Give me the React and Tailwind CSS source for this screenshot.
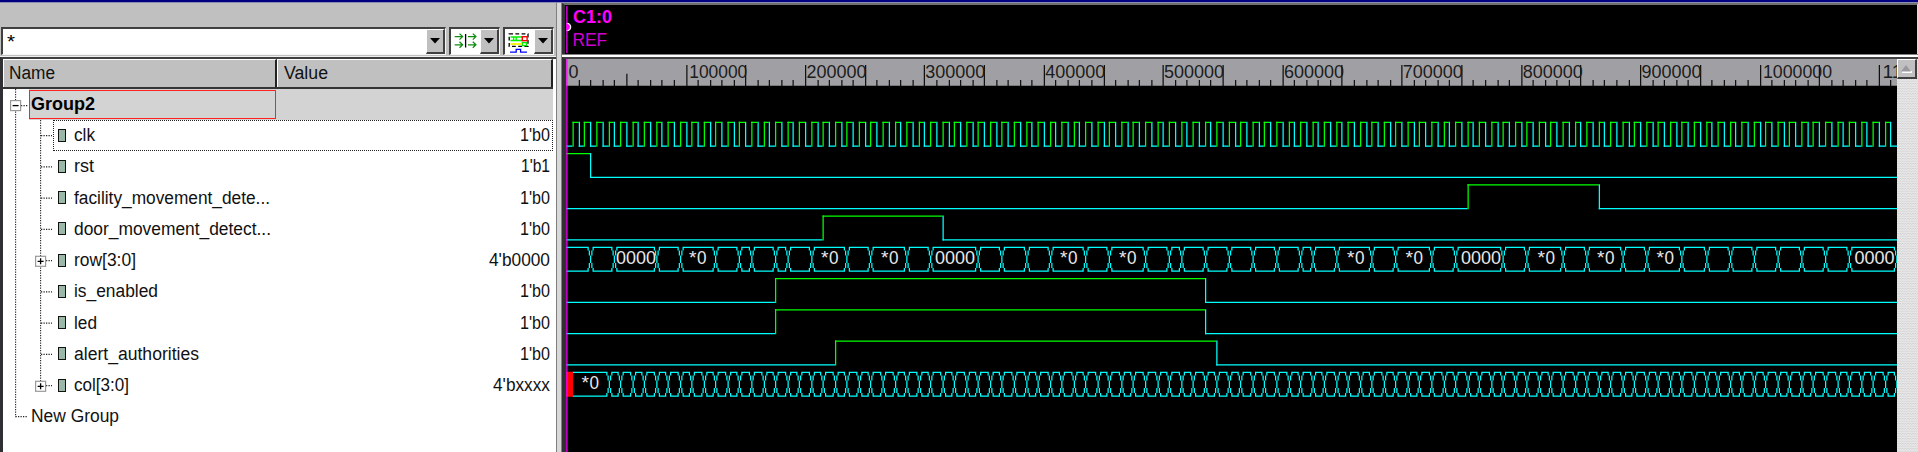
import React from "react";

const FONT = "'Liberation Sans', Arial, sans-serif";
const CYAN = "#00ffff";
const GREEN = "#00ff00";

// Waveform canvas uses device units; one unit is 1.25 CSS pixels.
const U = 1.25;
const ORIGIN = 453.6;
const STEP = 9.544;
const END = 1517.6;
const at = (t) => Math.floor(ORIGIN + STEP * t);

const signals = [
  { name: "clk", value: "1'b0", w: 21 },
  { name: "rst", value: "1'b1", w: 20 },
  { name: "facility_movement_dete...", value: "1'b0", w: 196 },
  { name: "door_movement_detect...", value: "1'b0", w: 197 },
  { name: "row[3:0]", value: "4'b0000", w: 62 },
  { name: "is_enabled", value: "1'b0", w: 84 },
  { name: "led", value: "1'b0", w: 23 },
  { name: "alert_authorities", value: "1'b0", w: 125 },
  { name: "col[3:0]", value: "4'bxxxx", w: 55 },
];
const valueWidth = { "1'b0": 30, "1'b1": 29, "4'b0000": 61, "4'bxxxx": 57 };

function Label({ x = 0, y = 17, w, size = 18, bold, fill = "#000", children }) {
  return (
    <text
      x={x}
      y={y}
      fontSize={size}
      fontFamily={FONT}
      fontWeight={bold ? 700 : 400}
      fill={fill}
      textLength={w}
      lengthAdjust="spacingAndGlyphs"
    >
      {children}
    </text>
  );
}

function Text({ w, bold, children }) {
  return (
    <svg width={w + 2} height="24" className="block shrink-0 overflow-visible">
      <Label w={w} bold={bold} fill={bold ? "#000" : "#111"}>
        {children}
      </Label>
    </svg>
  );
}

function Bit({ row, edges, start = 0 }) {
  const hi = 97 + row * 25;
  const lo = hi + 19;
  const out = [];
  let level = start;
  let x = 453;
  edges.forEach((t, i) => {
    const n = at(t);
    out.push(
      <rect key={`h${i}`} x={x} y={level ? hi : lo} width={n - x} height="1" fill={level ? GREEN : CYAN} />,
      <rect key={`v${i}`} x={n} y={hi} width="1" height="20" fill={level ? CYAN : GREEN} />
    );
    level = 1 - level;
    x = n;
  });
  out.push(<rect key="end" x={x} y={level ? hi : lo} width={END - x} height="1" fill={level ? GREEN : CYAN} />);
  return <g>{out}</g>;
}

function Bus({ row, cuts, from }) {
  const y = 97 + row * 25;
  const xs = cuts.map(at);
  let prev = from;
  let d = "";
  xs.forEach((n) => {
    d += `M${prev} ${y}H${n - 1}v1H${prev}zM${prev} ${y + 19}H${n - 1}v1H${prev}z`;
    [-1, 1].forEach((s) => {
      d += `M${n + 2 * s} ${y + 1}h1v2h-1zM${n + s} ${y + 3}h1v4h-1z`;
      d += `M${n + s} ${y + 13}h1v4h-1zM${n + 2 * s} ${y + 17}h1v2h-1z`;
    });
    d += `M${n} ${y + 7}h1v6h-1z`;
    prev = n + 2;
  });
  if (prev < END) d += `M${prev} ${y}H${END}v1H${prev}zM${prev} ${y + 19}H${END}v1H${prev}z`;
  return <path d={d} fill={CYAN} />;
}

const clkEdges = Array.from({ length: 222 }, (_, i) => (i + 1) * 0.5);
const rowCuts = [
  2, 4, 7.5, 9.5, 12.5, 14.5, 15.5, 17.5, 18.5, 20.5, 23.5, 25.5, 28.5, 30.5, 34.5, 36.5, 38.5, 40.5, 43.5,
  45.5, 48.5, 50.5, 51.5, 53.5, 55.5, 57.5, 59.5, 61.5, 62.5, 64.5, 67.5, 69.5, 72.5, 74.5, 78.5, 80.5, 83.5,
  85.5, 88.5, 90.5, 93.5, 95.5, 97.5, 99.5, 101.5, 103.5, 105.5, 107.5, 111.5,
];
const colCuts = Array.from({ length: 109 }, (_, i) => i + 3.5);
const starLabels = [689, 821, 881, 1060, 1119, 1347, 1405.5, 1537.5, 1597, 1656.5];
const zeroLabels = [616.5, 935.5, 1461.5, 1855];

function Star({ x, y }) {
  return (
    <g>
      <Label x={x + 0.5} y={y} w={7.5} fill="#e8e8e8">*</Label>
      <Label x={x + 8.5} y={y} w={9.5} fill="#e8e8e8">0</Label>
    </g>
  );
}

function Waves() {
  return (
    <svg width="1331" height="365.5" viewBox="566 86.5 1331 365.5" className="block shrink-0 bg-black">
      <g transform={`scale(${U})`}>
        <Bit row={0} edges={clkEdges} />
        <Bit row={1} edges={[2]} start={1} />
        <Bit row={2} edges={[75.5, 86.5]} />
        <Bit row={3} edges={[21.5, 31.5]} />
        <Bus row={4} cuts={rowCuts} from={453} />
        <Bit row={5} edges={[17.5, 53.5]} />
        <Bit row={6} edges={[17.5, 53.5]} />
        <Bit row={7} edges={[22.5, 54.5]} />
        <Bus row={8} cuts={colCuts} from={458} />
        <rect x="453" y="297" width="5.4" height="20" fill="#ff0000" />
        <rect x="453" y="68" width="1" height="300" fill="#ff00ff" />
      </g>
      {starLabels.map((x) => (
        <Star key={x} x={x - 0.5} y={263.5} />
      ))}
      {zeroLabels.map((x) => (
        <Label key={x} x={x - 0.5} y={263.5} w={40} fill="#e8e8e8">0000</Label>
      ))}
      <Star x={581} y={388.5} />
    </svg>
  );
}

function Ruler() {
  const ticks = [];
  for (let k = 1; k <= 111; k++) {
    const top = k % 10 === 0 ? 52 : k % 5 === 0 ? (k === 5 ? 59 : 52) : 64;
    ticks.push(<rect key={k} x={at(k)} y={top} width="1" height={69 - top} fill="#111" />);
  }
  return (
    <svg width="1331" height="27.5" viewBox="566 59 1331 27.5" className="block shrink-0 bg-[#a0a0a4]">
      <g transform={`scale(${U})`}>
        {ticks}
        <rect x="453" y="68.6" width="1070" height="1" fill="#000" />
        <rect x="453" y="45" width="1" height="26" fill="#ff00ff" />
      </g>
      <Label x={568.5} y={77.5} w={10} fill="#1c1c1c">0</Label>
      {[1, 2, 3, 4, 5, 6, 7, 8, 9].map((n) => (
        <Label key={n} x={at(n * 10) * U + (n === 1 ? 3 : 1.5)} y={77.5} w={n === 1 ? 58 : 60} fill="#1c1c1c">
          {`${n}00000`}
        </Label>
      ))}
      <Label x={1763} y={77.5} w={69} fill="#1c1c1c">1000000</Label>
      <Label x={1882.5} y={77.5} w={20} fill="#1c1c1c">11</Label>
    </svg>
  );
}

function DropButton() {
  return (
    <div className="flex h-full w-[19.5px] items-center justify-center border-t-[1.25px] border-r-2 border-b-2 border-l-[1.25px] border-t-white border-l-white border-r-[#404040] border-b-[#404040] bg-[#c0c0c0]">
      <svg width="10" height="6" viewBox="0 0 10 6">
        <path d="M0 0H10L5 5.5Z" fill="#000" />
      </svg>
    </div>
  );
}

function Combo({ className, children }) {
  return (
    <div
      className={`flex h-[28px] items-stretch justify-between border-t-2 border-l-2 border-r border-b border-t-[#404040] border-l-[#404040] border-r-[#f4f4f4] border-b-[#f4f4f4] bg-white ${className}`}
    >
      {children}
      <DropButton />
    </div>
  );
}

function AlignIcon() {
  return (
    <svg width="24" height="24" viewBox="0 0 24 24" className="ml-[2px] mt-px overflow-visible" fill="none">
      <path
        d="M1.7 6.6H9.7M6.5 3.6L9.6 6.6L6.5 9.6M1.7 14.8H9.7M6.5 11.8L9.6 14.8L6.5 17.8M15 6.6H23M19.8 3.6L22.9 6.6L19.8 9.6M15 14.8H23M19.8 11.8L22.9 14.8L19.8 17.8"
        stroke="#108a10"
        strokeWidth="1.25"
      />
      <path d="M12.6 4V17.5" stroke="#000" strokeWidth="1.3" />
    </svg>
  );
}

function GroupIcon() {
  return (
    <svg width="22" height="23" viewBox="0 0 22 23" className="ml-[3px] overflow-visible" fill="none">
      <rect x="1.2" y="4.9" width="18.8" height="12.4" stroke="#000" strokeWidth="1.3" strokeDasharray="3.8 2.4" />
      <path d="M2.5 8H14M2.5 11.6H14" stroke="#00f000" strokeWidth="1.5" />
      <path d="M5.6 8V11.6M8.2 8V11.6" stroke="#00f000" strokeWidth="1.3" />
      <path d="M2.5 15H13" stroke="#f5f500" strokeWidth="1.8" />
      <rect x="14.3" y="7.7" width="4.8" height="4" stroke="#ff0000" strokeWidth="1.4" />
      <rect x="14.3" y="13.6" width="4" height="3" stroke="#00e800" strokeWidth="1.3" />
      <path d="M2 23.2H8.2V20.4H12.6V23.2H19" stroke="#0000ff" strokeWidth="1.3" />
    </svg>
  );
}

function TreeLines() {
  const dash = { stroke: "#222", strokeWidth: 1.1, strokeDasharray: "1.25 1.25" };
  const box = (x, y, plus) => (
    <g key={`${x}-${y}`}>
      <rect x={x - 5} y={y - 5} width="10" height="10" fill="#fff" stroke="#999" strokeWidth="1.2" />
      <path d={`M${x - 3} ${y}H${x + 3}${plus ? `M${x} ${y - 3}V${y + 3}` : ""}`} stroke="#000" strokeWidth="1.3" />
    </g>
  );
  return (
    <svg width="550" height="363" viewBox="0 89 550 363" className="pointer-events-none absolute top-0 left-[-3px]">
      <path d="M15.6 89V416.6H27M21 105.6H28" fill="none" {...dash} />
      <path d="M40.6 120V386" {...dash} />
      {signals.map((s, i) => (
        <path key={s.name} d={`M41 ${135.6 + i * 31.25}H52`} {...dash} />
      ))}
      {box(15.6, 105.6, false)}
      {box(40.6, 261.3, true)}
      {box(40.6, 386.3, true)}
    </svg>
  );
}

function LeftPane() {
  return (
    <div className="flex w-[556px] shrink-0 flex-col bg-[#c0c0c0]">
      <div className="flex h-[53px] shrink-0 items-end pt-[23px] pl-px">
        <div className="flex h-[30px] w-full items-start">
          <Combo className="mt-[1px] w-[445px]">
            <div className="pt-[1px] pl-[5px]">
              <svg width="8" height="22" className="block overflow-visible">
                <Label x={-1} y={18} w={8}>*</Label>
              </svg>
            </div>
          </Combo>
          <Combo className="mt-[1px] ml-[3px] w-[51px]">
            <AlignIcon />
          </Combo>
          <Combo className="mt-[1px] ml-[3px] w-[51px]">
            <GroupIcon />
          </Combo>
        </div>
      </div>
      <div className="h-px shrink-0 bg-[#f0f0f0]" />
      <div className="flex h-[395px] flex-col border-t-2 border-l-[3px] border-[#404040] border-l-[#303034] bg-white">
        <div className="flex h-[30px] w-[550px] shrink-0 border-b-2 border-[#333] bg-[#c0c0c0]">
          <div className="flex w-[274px] border-t border-l border-r-2 border-t-white border-l-white border-r-[#222] pt-[2px] pl-[5px]">
            <Text w={46}>Name</Text>
          </div>
          <div className="flex grow border-t border-l border-r-2 border-t-white border-l-white border-r-[#222] pt-[2px] pl-[6px]">
            <Text w={44}>Value</Text>
          </div>
        </div>
        <div className="relative flex w-[550px] grow flex-col">
          <TreeLines />
          <div className="ml-[26px] flex h-[31px] shrink-0 bg-[#d3d3d3] pt-[1px]">
            <div className="flex h-[29px] w-[247px] border border-[#ff2020] pt-[2px] pl-[1px]">
              <Text w={64} bold>Group2</Text>
            </div>
          </div>
          {signals.map((s, i) => (
            <div
              key={s.name}
              className={`ml-[50px] flex h-[31.25px] shrink-0 items-start justify-between pt-[4px] pr-[1px] ${
                i === 0 ? "outline-1 -outline-offset-1 outline-dotted outline-[#222]" : ""
              }`}
            >
              <div className="flex">
                <div className="mt-[4.5px] mr-[8.5px] ml-[5px] h-[13px] w-[7.5px] border-[1.5px] border-[#111] bg-[#9ab8a8]" />
                <Text w={s.w}>{s.name}</Text>
              </div>
              <Text w={valueWidth[s.value]}>{s.value}</Text>
            </div>
          ))}
          <div className="ml-[28px] pt-[4px]">
            <Text w={88}>New Group</Text>
          </div>
        </div>
      </div>
    </div>
  );
}

export default function App() {
  return (
    <div className="flex h-[452px] w-[1918px] flex-col overflow-hidden bg-[#c0c0c0]">
      <div className="h-[3px] shrink-0 border-b border-[#8c8cb0] bg-[#000080]" />
      <div className="flex h-[449px]">
        <LeftPane />
        <div className="w-[6px] shrink-0 border-r-[1.25px] border-l-[1.25px] border-r-[#808080] border-l-[#808080] bg-[#d8d8d8]" />
        <div className="flex w-[1356px] flex-col">
          <div className="h-[51px] shrink-0 border-t-2 border-r border-l-[3px] border-t-[#707070] border-r-[#dcdcdc] border-l-[#303034] bg-black">
            <svg width="120" height="49" viewBox="565 5 120 49" className="block">
              <circle cx="567" cy="27" r="3.6" fill="#ff00ff" stroke="#fff" strokeWidth="1.4" />
              <rect x="565" y="5" width="1.3" height="49" fill="#000" />
              <rect x="566.25" y="6" width="1.25" height="47" fill="#ff00ff" />
              <Label x={573} y={22.5} w={39} bold fill="#ff00ff">C1:0</Label>
              <Label x={572.5} y={46} w={34.5} fill="#d000d0">REF</Label>
            </svg>
          </div>
          <div className="h-[3px] shrink-0 border-t border-[#808080] bg-white" />
          <div className="flex h-[395px] border-t-2 border-l-[4px] border-t-[#404040] border-l-[#303034]">
            <div className="flex w-[1331px] flex-col">
              <Ruler />
              <Waves />
            </div>
            <div className="flex w-[21px] flex-col bg-[#dcdcdc] bg-[conic-gradient(#d0d0d0_25%,#e8e8e8_0_50%,#d0d0d0_0_75%,#e8e8e8_0)] bg-size-[2.5px_2.5px]">
              <div className="flex h-[20px] w-[20px] items-center justify-center border-t-[1.5px] border-r-2 border-b-2 border-l-[1.5px] border-t-white border-l-white border-r-[#404040] border-b-[#404040] bg-[#c0c0c0]">
                <svg width="11" height="8" viewBox="0 0 11 8">
                  <path d="M1 7H11" stroke="#fff" strokeWidth="2" />
                  <path d="M0 6.5L5 0L10 6.5Z" fill="#9a9a9e" />
                </svg>
              </div>
            </div>
          </div>
        </div>
      </div>
    </div>
  );
}
